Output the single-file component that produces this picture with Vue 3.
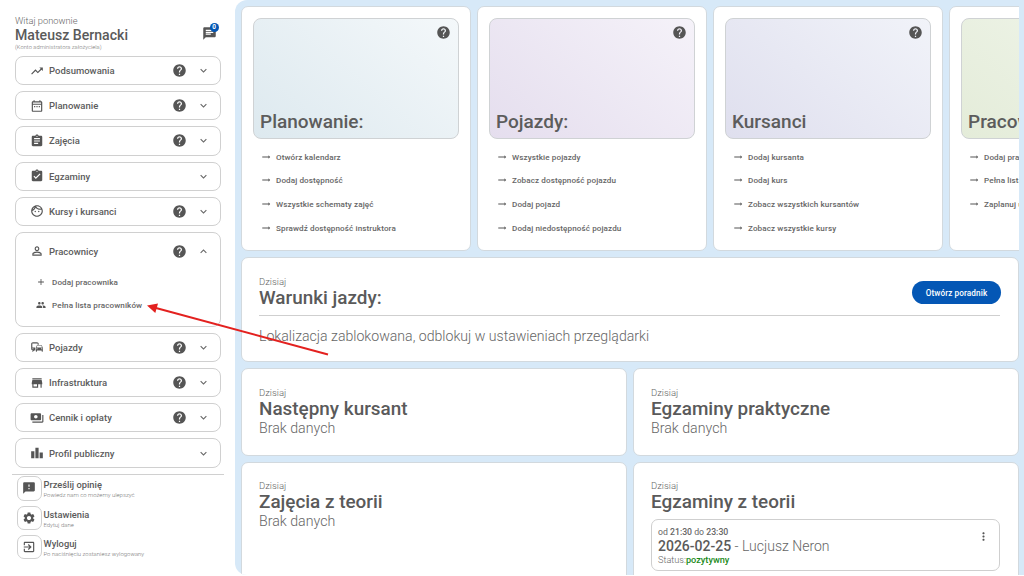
<script setup>
const I = {
  trend: 'M16 6l2.29 2.29-4.88 4.88-4-4L2 16.59 3.41 18l6-6 4 4 6.3-6.29L22 12V6z',
  cal: 'M19 4h-1V2h-2v2H8V2H6v2H5c-1.1 0-2 .9-2 2v14c0 1.1.9 2 2 2h14c1.1 0 2-.9 2-2V6c0-1.1-.9-2-2-2zm0 16H5V10h14v10zm0-12H5V6h14v2zM9 14H7v-2h2v2zm4 0h-2v-2h2v2zm4 0h-2v-2h2v2z',
  assign: 'M19 3h-4.18C14.4 1.84 13.3 1 12 1c-1.3 0-2.4.84-2.82 2H5c-1.1 0-2 .9-2 2v14c0 1.1.9 2 2 2h14c1.1 0 2-.9 2-2V5c0-1.1-.9-2-2-2zm-7 0c.55 0 1 .45 1 1s-.45 1-1 1-1-.45-1-1 .45-1 1-1zm2 14H7v-2h7v2zm3-4H7v-2h10v2zm0-4H7V7h10v2z',
  check: 'M19 3h-4.18C14.4 1.84 13.3 1 12 1c-1.3 0-2.4.84-2.82 2H5c-1.1 0-2 .9-2 2v14c0 1.1.9 2 2 2h14c1.1 0 2-.9 2-2V5c0-1.1-.9-2-2-2zm-7 0c.55 0 1 .45 1 1s-.45 1-1 1-1-.45-1-1 .45-1 1-1zm-2 14l-4-4 1.41-1.41L10 14.17l6.59-6.59L18 9l-8 8z',
  face: 'M10.25 13c0 .69-.56 1.25-1.25 1.25S7.75 13.69 7.75 13s.56-1.25 1.25-1.25 1.25.56 1.25 1.25zM15 11.75c-.69 0-1.25.56-1.25 1.25s.56 1.25 1.25 1.25 1.25-.56 1.25-1.25-.56-1.25-1.25-1.25zm7 .25c0 5.52-4.48 10-10 10S2 17.52 2 12 6.48 2 12 2s10 4.48 10 10zM10.66 4.12C12.06 6.44 14.6 8 17.5 8c.46 0 .91-.05 1.34-.12C17.44 5.56 14.9 4 12 4c-.46 0-.91.05-1.34.12zM4.42 9.47c1.71-.97 3.03-2.55 3.66-4.44C6.37 6 5.05 7.58 4.42 9.47zM20 12c0-.78-.12-1.53-.33-2.24-.7.15-1.42.24-2.17.24-3.13 0-5.92-1.44-7.76-3.69C8.69 8.87 6.6 10.88 4 11.86c.01.04 0 .09 0 .14 0 4.41 3.59 8 8 8s8-3.59 8-8z',
  person: 'M12 5.9c1.16 0 2.1.94 2.1 2.1s-.94 2.1-2.1 2.1S9.9 9.16 9.9 8s.94-2.1 2.1-2.1m0 9c2.97 0 6.1 1.46 6.1 2.1v1.1H5.9V17c0-.64 3.13-2.1 6.1-2.1M12 4C9.79 4 8 5.79 8 8s1.79 4 4 4 4-1.79 4-4-1.79-4-4-4zm0 9c-2.67 0-8 1.34-8 4v3h16v-3c0-2.66-5.33-4-8-4z',
  commute: 'M12 4H5C3.34 4 2 5.34 2 7v8c0 1.66 1.34 3 3 3l-1 1v1h1l2-2.03L9 18v-5H4V5.98L13 6v2h2V7c0-1.66-1.34-3-3-3zM5 14c.55 0 1 .45 1 1s-.45 1-1 1-1-.45-1-1 .45-1 1-1zm15.57-4.34c-.14-.4-.52-.66-.97-.66h-7.19c-.46 0-.83.26-.98.66L10 13.77l.01 5.51c0 .38.31.72.69.72h.62c.38 0 .68-.38.68-.76V18h8v1.24c0 .38.31.76.69.76h.61c.38 0 .69-.34.69-.72l.01-1.37v-4.14l-1.43-4.11zm-8.16.34h7.19l1.03 3h-9.25l1.03-3zM12 16c-.55 0-1-.45-1-1s.45-1 1-1 1 .45 1 1-.45 1-1 1zm8 0c-.55 0-1-.45-1-1s.45-1 1-1 1 .45 1 1-.45 1-1 1z',
  store: 'M20 4H4v2h16V4zm1 10v-2l-1-5H4l-1 5v2h1v6h10v-6h4v6h2v-6h1zm-9 4H6v-4h6v4z',
  pay: 'M19 14V6c0-1.1-.9-2-2-2H3c-1.1 0-2 .9-2 2v8c0 1.1.9 2 2 2h14c1.1 0 2-.9 2-2zm-9-1c-1.66 0-3-1.34-3-3s1.34-3 3-3 3 1.34 3 3-1.34 3-3 3zm13-6v11c0 1.1-.9 2-2 2H4v-2h17V7h2z',
  board: 'M7.5 21H2V9h5.5v12zm7.25-18h-5.5v18h5.5V3zM22 11h-5.5v10H22V11z',
  help: 'M12 2C6.48 2 2 6.48 2 12s4.48 10 10 10 10-4.48 10-10S17.52 2 12 2zm1 17h-2v-2h2v2zm2.07-7.75l-.9.92C13.45 12.9 13 13.5 13 15h-2v-.5c0-1.1.45-2.1 1.17-2.83l1.24-1.26c.37-.36.59-.86.59-1.41 0-1.1-.9-2-2-2s-2 .9-2 2H8c0-2.21 1.79-4 4-4s4 1.79 4 4c0 .88-.36 1.68-.93 2.25z',
  more: 'M16.59 8.59L12 13.17 7.41 8.59 6 10l6 6 6-6z',
  less: 'M12 8l-6 6 1.41 1.41L12 10.83l4.59 4.58L18 14z',
  add: 'M19 13h-6v6h-2v-6H5v-2h6V5h2v6h6v2z',
  people: 'M16 11c1.66 0 2.99-1.34 2.99-3S17.66 5 16 5c-1.66 0-3 1.34-3 3s1.34 3 3 3zm-8 0c1.66 0 2.99-1.34 2.99-3S9.66 5 8 5C6.34 5 5 6.34 5 8s1.34 3 3 3zm0 2c-2.33 0-7 1.17-7 3.5V19h14v-2.5c0-2.33-4.67-3.5-7-3.5zm8 0c-.29 0-.62.02-.97.05 1.16.84 1.97 1.97 1.97 3.45V19h6v-2.5c0-2.33-4.67-3.5-7-3.5z',
  feedback: 'M20 2H4c-1.1 0-1.99.9-1.99 2L2 22l4-4h14c1.1 0 2-.9 2-2V4c0-1.1-.9-2-2-2zm-7 12h-2v-2h2v2zm0-4h-2V6h2v4z',
  settings: 'M19.14 12.94c.04-.3.06-.61.06-.94 0-.32-.02-.64-.07-.94l2.03-1.58c.18-.14.23-.41.12-.61l-1.92-3.32c-.12-.22-.37-.29-.59-.22l-2.39.96c-.5-.38-1.03-.7-1.62-.94l-.36-2.54c-.04-.24-.24-.41-.48-.41h-3.84c-.24 0-.43.17-.47.41l-.36 2.54c-.59.24-1.13.57-1.62.94l-2.39-.96c-.22-.08-.47 0-.59.22L2.74 8.87c-.12.21-.08.47.12.61l2.03 1.58c-.05.3-.09.63-.09.94s.02.64.07.94l-2.03 1.58c-.18.14-.23.41-.12.61l1.92 3.32c.12.22.37.29.59.22l2.39-.96c.5.38 1.03.7 1.62.94l.36 2.54c.05.24.24.41.48.41h3.84c.24 0 .44-.17.47-.41l.36-2.54c.59-.24 1.13-.56 1.62-.94l2.39.96c.22.08.47 0 .59-.22l1.92-3.32c.12-.22.07-.47-.12-.61l-2.01-1.58zM12 15.6c-1.98 0-3.6-1.62-3.6-3.6s1.62-3.6 3.6-3.6 3.6 1.62 3.6 3.6-1.62 3.6-3.6 3.6z',
  exit: 'M10.09 15.59L11.5 17l5-5-5-5-1.41 1.41L12.67 11H3v2h9.67l-2.58 2.59zM19 3H5c-1.11 0-2 .9-2 2v4h2V5h14v14H5v-4H3v4c0 1.1.89 2 2 2h14c1.1 0 2-.9 2-2V5c0-1.1-.9-2-2-2z',
  arrow: 'M22 12l-4-4v3H3v2h15v3z',
  vert: 'M12 8c1.1 0 2-.9 2-2s-.9-2-2-2-2 .9-2 2 .9 2 2 2zm0 2c-1.1 0-2 .9-2 2s.9 2 2 2 2-.9 2-2-.9-2-2-2zm0 6c-1.1 0-2 .9-2 2s.9 2 2 2 2-.9 2-2-.9-2-2-2z',
  chat: 'M20 2H4c-1.1 0-1.99.9-1.99 2L2 22l4-4h14c1.1 0 2-.9 2-2V4c0-1.1-.9-2-2-2zM6 9h12v2H6V9zm8 5H6v-2h8v2zm4-6H6V6h12v2z'
}

const menu = [
  { label: 'Podsumowania', icon: I.trend, help: true },
  { label: 'Planowanie', icon: I.cal, help: true },
  { label: 'Zajęcia', icon: I.assign, help: true },
  { label: 'Egzaminy', icon: I.check, help: false },
  { label: 'Kursy i kursanci', icon: I.face, help: true },
  { label: 'Pracownicy', icon: I.person, help: true, open: true,
    subs: [{ label: 'Dodaj pracownika', icon: I.add }, { label: 'Pełna lista pracowników', icon: I.people }] },
  { label: 'Pojazdy', icon: I.commute, help: true },
  { label: 'Infrastruktura', icon: I.store, help: true },
  { label: 'Cennik i opłaty', icon: I.pay, help: true },
  { label: 'Profil publiczny', icon: I.board, help: false }
]

const actions = [
  { title: 'Prześlij opinię', sub: 'Powiedz nam co możemy ulepszyć', icon: I.feedback },
  { title: 'Ustawienia', sub: 'Edytuj dane', icon: I.settings },
  { title: 'Wyloguj', sub: 'Po naciśnięciu zostaniesz wylogowany', icon: I.exit }
]

const tiles = [
  { title: 'Planowanie:', tone: 'blue', help: true, links: ['Otwórz kalendarz', 'Dodaj dostępność', 'Wszystkie schematy zajęć', 'Sprawdź dostępność instruktora'] },
  { title: 'Pojazdy:', tone: 'violet', help: true, links: ['Wszystkie pojazdy', 'Zobacz dostępność pojazdu', 'Dodaj pojazd', 'Dodaj niedostępność pojazdu'] },
  { title: 'Kursanci', tone: 'indigo', help: true, links: ['Dodaj kursanta', 'Dodaj kurs', 'Zobacz wszystkich kursantów', 'Zobacz wszystkie kursy'] },
  { title: 'Pracownicy', tone: 'green', help: false, links: ['Dodaj pracownika', 'Pełna lista pracowników', 'Zaplanuj urlop'] }
]
</script>

<template>
  <div class="page">
    <aside class="side">
      <div class="head">
        <div class="who">
          <div class="hello">Witaj ponownie</div>
          <div class="name">Mateusz Bernacki</div>
          <div class="role">(Konto administratora założyciela)</div>
        </div>
        <div class="bell">
          <svg viewBox="0 0 24 24" class="bell-i"><path :d="I.chat" /></svg>
          <span class="badge">0</span>
        </div>
      </div>

      <nav class="menu">
        <div v-for="m in menu" :key="m.label" class="acc" :class="{ open: m.open }">
          <div class="acc-row">
            <svg viewBox="0 0 24 24" class="acc-i"><path :d="m.icon" /></svg>
            <span class="acc-label">{{ m.label }}</span>
            <svg v-if="m.help" viewBox="0 0 24 24" class="acc-help"><path :d="I.help" /></svg>
            <svg viewBox="0 0 24 24" class="acc-chev"><path :d="m.open ? I.less : I.more" /></svg>
          </div>
          <div v-if="m.subs" class="subs">
            <div v-for="s in m.subs" :key="s.label" class="sub">
              <svg viewBox="0 0 24 24" class="sub-i"><path :d="s.icon" /></svg>
              <span>{{ s.label }}</span>
            </div>
          </div>
        </div>
      </nav>

      <div class="actions">
        <div v-for="a in actions" :key="a.title" class="action">
          <div class="action-box"><svg viewBox="0 0 24 24" class="action-i"><path :d="a.icon" /></svg></div>
          <div class="action-text">
            <div class="action-title">{{ a.title }}</div>
            <div class="action-sub">{{ a.sub }}</div>
          </div>
        </div>
      </div>
    </aside>

    <main class="main">
      <section class="tiles">
        <article v-for="t in tiles" :key="t.title" class="card tile">
          <div class="hero" :class="t.tone">
            <svg v-if="t.help" viewBox="0 0 24 24" class="hero-help"><path :d="I.help" /></svg>
            <h2 class="hero-title">{{ t.title }}</h2>
          </div>
          <ul class="links">
            <li v-for="l in t.links" :key="l" class="link">
              <svg viewBox="0 0 24 24" class="link-i"><path :d="I.arrow" /></svg>
              <span>{{ l }}</span>
            </li>
          </ul>
        </article>
      </section>

      <section class="card weather">
        <div class="weather-head">
          <div>
            <div class="today">Dzisiaj</div>
            <h3 class="title">Warunki jazdy:</h3>
          </div>
          <button class="btn">Otwórz poradnik</button>
        </div>
        <div class="note">Lokalizacja zablokowana, odblokuj w ustawieniach przeglądarki</div>
      </section>

      <section class="grid">
        <article class="card info short">
          <div class="today">Dzisiaj</div>
          <h3 class="title">Następny kursant</h3>
          <div class="none">Brak danych</div>
        </article>
        <article class="card info short">
          <div class="today">Dzisiaj</div>
          <h3 class="title">Egzaminy praktyczne</h3>
          <div class="none">Brak danych</div>
        </article>
        <article class="card info tall">
          <div class="today">Dzisiaj</div>
          <h3 class="title">Zajęcia z teorii</h3>
          <div class="none">Brak danych</div>
        </article>
        <article class="card info tall">
          <div class="today">Dzisiaj</div>
          <h3 class="title">Egzaminy z teorii</h3>
          <div class="exam">
            <div>
              <div class="exam-time">od <b>21:30</b> do <b>23:30</b></div>
              <div class="exam-main"><b>2026-02-25</b> - Lucjusz Neron</div>
              <div class="exam-status">Status:<b>pozytywny</b></div>
            </div>
            <svg viewBox="0 0 24 24" class="exam-more"><path :d="I.vert" /></svg>
          </div>
        </article>
      </section>
    </main>

    <svg class="pointer" viewBox="0 0 340 100" width="340" height="100">
      <line x1="328" y1="94.5" x2="156" y2="48" stroke="#e3211f" stroke-width="2" />
      <polygon points="147,45.5 158,43.4 155.3,53" fill="#e3211f" />
    </svg>
  </div>
</template>

<style>
html, body { margin: 0; background: #fff; }
</style>

<style scoped>
* { box-sizing: border-box; }
.page {
  position: relative;
  width: 1024px;
  height: 576px;
  overflow: hidden;
  display: flex;
  font-family: Roboto, "Noto Sans", sans-serif;
  color: #5a5a5a;
  background: #fff;
}
.side { width: 235px; flex: none; padding: 15px 0 0; }
.head { display: flex; justify-content: space-between; padding: 0 15px; height: 38px; }
.hello { font-size: 9.3px; font-weight: 300; line-height: 12px; color: #666; }
.name { font-size: 14.1px; font-weight: 500; line-height: 17px; color: #5a5a5a; }
.role { font-size: 5.8px; line-height: 7px; font-weight: 300; color: #777; }
.bell { position: relative; width: 14px; margin: 10.5px 3px 0 0; }
.bell-i { width: 15px; height: 15px; fill: #555; display: block; margin-left: -1px; }
.badge {
  position: absolute; top: -2.5px; left: 6.5px;
  width: 9px; height: 9px; border-radius: 50%;
  background: #0457b5; color: #fff;
  font-size: 6.5px; font-weight: 700; line-height: 9px; text-align: center;
}
.menu { margin: 3px 14px 0 15px; display: flex; flex-direction: column; gap: 6px; }
.acc { border: 1px solid #d0d0d0; border-radius: 8px; background: #fff; }
.acc-row { height: 27.2px; display: flex; align-items: center; padding: 0 10px 0 13.5px; }
.acc.open .acc-row { height: 36.4px; }
.acc-i { width: 14px; height: 14px; fill: #555; flex: none; }
.acc-label { margin-left: 5.5px; font-size: 9.5px; font-weight: 500; flex: 1; color: #5c5c5c; }
.acc-help { width: 15px; height: 15px; fill: #555; flex: none; }
.acc-chev { width: 13px; height: 13px; fill: #666; flex: none; margin-left: 10px; }
.subs { padding: 4.3px 0 12.25px 20px; display: flex; flex-direction: column; gap: 7px; }
.sub { display: flex; align-items: center; height: 16.5px; font-size: 8.1px; font-weight: 500; color: #666; letter-spacing: .1px; }
.sub-i { width: 10px; height: 10px; fill: #555; margin-right: 6px; flex: none; }

.actions { margin: 6.2px 11px 0 12px; border-top: 1px solid #d0d0d0; padding: 1.4px 0 0 5px; display: flex; flex-direction: column; gap: 4.8px; }
.action { display: flex; gap: 2px; }
.action-box {
  width: 24.5px; height: 24.5px; border: 1px solid #d0d0d0; border-radius: 7px;
  display: flex; align-items: center; justify-content: center; flex: none;
}
.action-i { width: 14px; height: 14px; fill: #555; }
.action-title { font-size: 9.3px; font-weight: 500; line-height: 12px; margin-top: 3px; color: #5a5a5a; }
.action-sub { font-size: 5.95px; font-weight: 300; line-height: 7px; color: #777; }

.main {
  width: 789px; flex: none; height: 575px;
  background: #d7e9f8;
  border-radius: 12px 0 0 12px;
  padding: 6px 5px 0 6px;
  overflow: hidden;
  display: flex; flex-direction: column; gap: 6px;
}
.card { background: #fff; border: 1px solid #d2d9de; border-radius: 7px; flex: none; }
.tiles { display: flex; gap: 6px; overflow: hidden; flex: none; }
.tile { width: 230px; height: 245px; padding: 11px; }
.hero {
  position: relative; height: 121px; border: 1px solid #cfd2d4; border-radius: 8px;
  display: flex; align-items: flex-end; padding: 0 6px 4px;
}
.blue { background: linear-gradient(40deg, #dde9ef, #f4f8fa); }
.violet { background: linear-gradient(40deg, #e5deee, #f5f2f9); }
.indigo { background: linear-gradient(40deg, #dfdfee, #f1f3f9); }
.green { background: linear-gradient(40deg, #e4ecd9, #f1f6ec); }
.hero-help { position: absolute; top: 6px; right: 7px; width: 15px; height: 15px; fill: #555; }
.hero-title { margin: 0; font-size: 19px; font-weight: 500; line-height: 24px; color: #5c5c5c; white-space: nowrap; }
.links { list-style: none; margin: 6px 0 0; padding: 0 0 0 8px; }
.link { height: 23.6px; display: flex; align-items: center; font-size: 8.1px; font-weight: 500; color: #666; white-space: nowrap; letter-spacing: .1px; }
.link-i { width: 10px; height: 10px; fill: #555; margin-right: 5px; flex: none; }

.weather { height: 105px; padding: 18px 18px 0 17px; }
.weather-head { display: flex; justify-content: space-between; align-items: flex-start; height: 40px; border-bottom: 1px solid #cfcfcf; }
.today { font-size: 9.5px; font-weight: 300; line-height: 12px; color: #666; }
.title { margin: -1px 0 0; font-size: 18.9px; font-weight: 500; line-height: 21px; color: #5a5a5a; }
.btn {
  margin: 5px -1px 0 0; width: 89px; height: 23px; border: 0; border-radius: 12px;
  background: #0457b5; color: #fff; font: 500 8.2px Roboto, sans-serif; letter-spacing: .1px;
}
.note { margin-top: 12px; font-size: 14.1px; font-weight: 300; line-height: 17px; color: #666; }

.grid { display: grid; grid-template-columns: 386px 386px; gap: 6px; }
.info { padding: 18px 18px 0 17px; }
.short { height: 88px; }
.tall { height: 130px; padding-top: 17px; }
.none { font-size: 14.2px; font-weight: 300; line-height: 17px; color: #666; margin-top: 1px; }
.exam {
  margin-top: 7px; height: 52px; border: 1px solid #cfcfcf; border-radius: 7px;
  padding: 6px 9px 0 6px; display: flex; justify-content: space-between; align-items: flex-start;
}
.exam-time { font-size: 8.7px; line-height: 12px; color: #666; }
.exam-time b { font-weight: 500; }
.exam-main { font-size: 14px; font-weight: 300; line-height: 16px; color: #666; }
.exam-main b { font-weight: 500; color: #5a5a5a; }
.exam-status { font-size: 9.2px; font-weight: 300; line-height: 11px; color: #666; }
.exam-status b { font-weight: 500; color: #1a8a1a; }
.exam-more { width: 13px; height: 13px; fill: #555; margin-top: 4px; }

.pointer { position: absolute; left: 0; top: 260px; pointer-events: none; }
</style>
